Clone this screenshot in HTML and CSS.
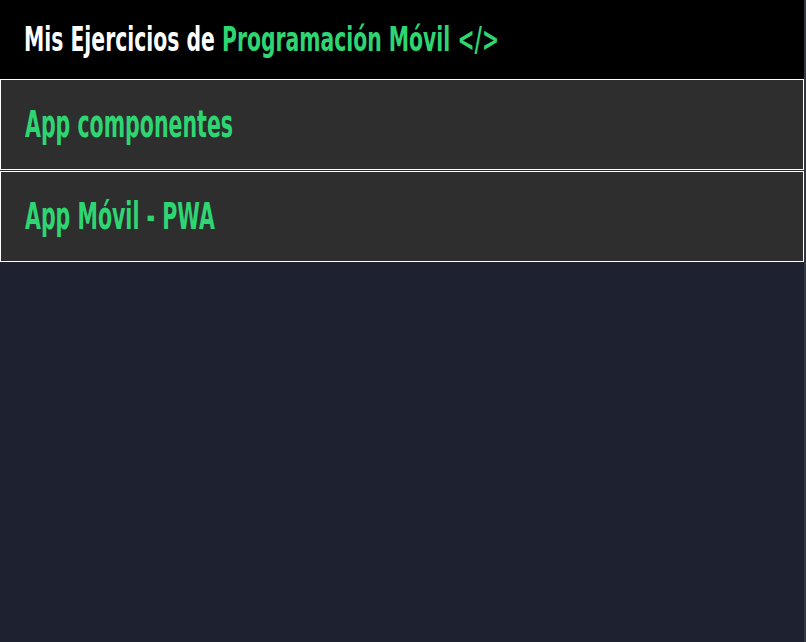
FILE: index.html
```html
<!DOCTYPE html>
<html lang="es">
<head>
<meta charset="utf-8">
<title>Mis Ejercicios de Programación Móvil</title>
<link rel="stylesheet" href="styles.css">
</head>
<body>
<div class="page">
  <header class="header">
    <h1 class="title"><span class="squeeze title-text">Mis Ejercicios de <span class="accent">Programación Móvil &lt;/&gt;</span></span></h1>
  </header>
  <nav class="list">
    <a class="card" href="#"><span class="squeeze card-text">App componentes</span></a>
    <a class="card" href="#"><span class="squeeze card-text">App Móvil - PWA</span></a>
  </nav>
</div>
<div class="edge"></div>
</body>
</html>
```

FILE: styles.css
```css
html, body {
  margin: 0;
  padding: 0;
  height: 100%;
}
body {
  background: #1e2230;
  font-family: "DejaVu Sans", "Liberation Sans", sans-serif;
  font-weight: bold;
  display: flex;
  overflow: hidden;
}
.page {
  flex: 1;
  display: flex;
  flex-direction: column;
}
.edge {
  width: 2px;
  background: #333842;
}
.header {
  background: #000;
  height: 79px;
  display: flex;
  align-items: center;
  padding-left: 24px;
}
.title {
  margin: 0;
  color: #fff;
  font-size: 33px;
  font-weight: bold;
  white-space: nowrap;
}
.squeeze {
  display: inline-block;
  transform-origin: left center;
  white-space: nowrap;
}
.title-text {
  transform: scaleX(0.617);
}
.card-text {
  transform: scaleX(0.555);
}
.accent {
  color: #2ed673;
}
.list {
  display: flex;
  flex-direction: column;
  gap: 1px;
  background: #2e2e2e;
}
.card {
  display: flex;
  align-items: center;
  height: 89px;
  border: 1px solid #fff;
  background: #2e2e2e;
  padding-left: 24px;
  color: #2ed673;
  text-decoration: none;
  font-size: 37px;
  white-space: nowrap;
}
```
